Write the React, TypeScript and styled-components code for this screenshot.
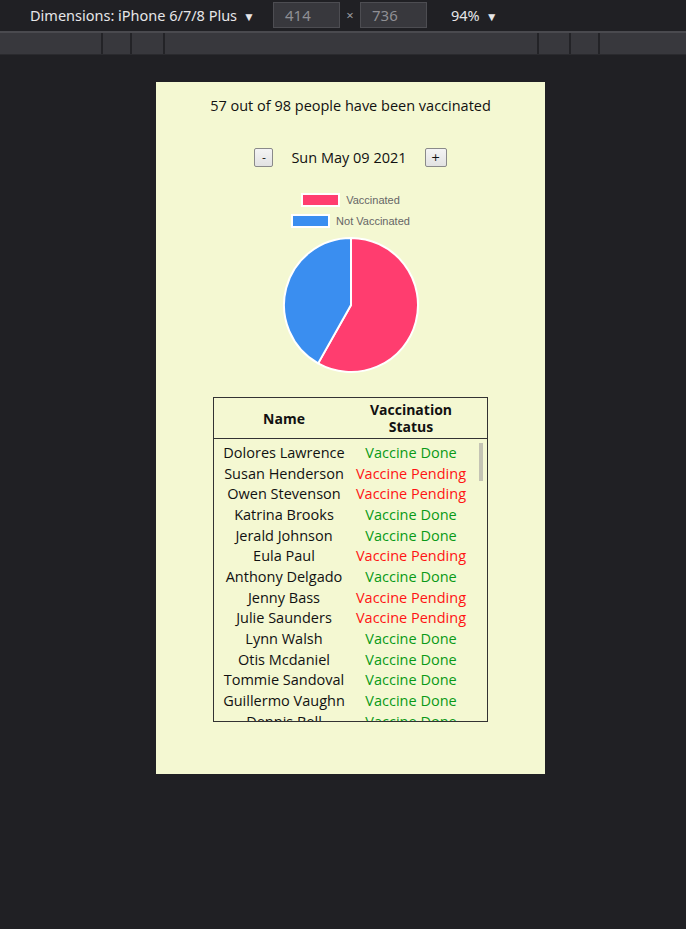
import React from "react";
import styled, { createGlobalStyle } from "styled-components";

const Global = createGlobalStyle`
  html, body { margin: 0; padding: 0; background: #202024; }
  body { font-family: "Open Sans", "Noto Sans", sans-serif; }
`;

const Page = styled.div`
  width: 686px;
  height: 929px;
  background: #202024;
  display: flex;
  flex-direction: column;
  overflow: hidden;
`;

const TopBar = styled.div`
  height: 33px;
  display: flex;
  align-items: center;
  padding-left: 30px;
  padding-bottom: 2px;
  color: #e6e6e8;
  font-size: 14.5px;
  font-family: "Noto Sans", sans-serif;
  box-sizing: border-box;
  border-bottom: 2px solid #4a4a4f;
`;

const DimLabel = styled.span`
  width: 243px;
`;

const Caret = styled.span`
  font-size: 12px;
  margin-left: 6px;
`;

const SizeBox = styled.div`
  width: 67px;
  height: 26px;
  box-sizing: border-box;
  background: #38383d;
  border: 1px solid #4d4d52;
  color: #8f8f94;
  font-size: 15px;
  display: flex;
  align-items: center;
  padding-left: 11px;
`;

const Times = styled.span`
  width: 20px;
  text-align: center;
  color: #9a9aa0;
  font-size: 13px;
`;

const Zoom = styled.span`
  margin-left: 24px;
`;

const Ruler = styled.div`
  height: 22px;
  box-sizing: border-box;
  background: #38383d;
  display: flex;
  border-bottom: 1px solid #2a2a2e;
`;

const RulerCell = styled.div<{ $w: number }>`
  box-sizing: border-box;
  width: ${(p) => p.$w}px;
  flex: ${(p) => (p.$w === 0 ? 1 : "none")};
  border-right: 2px solid #232327;
  &:last-child { border-right: none; }
`;

const Stage = styled.div`
  flex: 1;
  display: flex;
  justify-content: center;
  padding-top: 27px;
  padding-left: 15px;
`;

const Card = styled.div`
  width: 389px;
  height: 692px;
  background: #f4f8d2;
  display: flex;
  flex-direction: column;
  align-items: center;
  font-family: "Open Sans", "Noto Sans", sans-serif;
  color: #111;
`;

const Title = styled.div`
  margin-top: 14px;
  font-size: 14.5px;
  line-height: 20px;
`;

const DateRow = styled.div`
  margin-top: 32px;
  display: flex;
  align-items: center;
  gap: 18px;
  font-size: 14.5px;
`;

const StepButton = styled.button<{ $w: number }>`
  width: ${(p) => p.$w}px;
  height: 19px;
  padding: 0;
  font-size: 11px;
  line-height: 1;
  border: 1px solid #8a8a8a;
  border-radius: 2px;
  background: linear-gradient(#f4f4f4, #e2e2e2);
  color: #111;
  font-family: "DejaVu Sans", sans-serif;
`;

const Legend = styled.div`
  margin-top: 25px;
  display: flex;
  flex-direction: column;
  align-items: center;
  gap: 6px;
  font-family: "Liberation Sans", Arial, sans-serif;
  font-size: 11px;
  color: #666;
`;

const LegendItem = styled.div`
  display: flex;
  align-items: center;
  gap: 6px;
  height: 15px;
`;

const Swatch = styled.span<{ $c: string }>`
  width: 35px;
  height: 10px;
  background: ${(p) => p.$c};
  border: 2px solid #fff;
`;

const PieWrap = styled.div`
  margin-top: 8px;
  width: 138px;
  height: 138px;
`;

const Table = styled.div`
  margin-top: 23px;
  width: 275px;
  border: 1px solid #333;
  box-sizing: border-box;
  display: flex;
  flex-direction: column;
`;

const HeadRow = styled.div`
  display: grid;
  grid-template-columns: 140px 114px;
  height: 40px;
  align-items: center;
  border-bottom: 1px solid #333;
  font-weight: 700;
  font-size: 14px;
  line-height: 17px;
  text-align: center;
`;

const BodyFrame = styled.div`
  position: relative;
`;

const Body = styled.div`
  height: 282px;
  overflow-y: scroll;
  padding-top: 3px;
  box-sizing: border-box;
  scrollbar-width: none;
  &::-webkit-scrollbar { display: none; }
`;

const Thumb = styled.div`
  position: absolute;
  right: 4px;
  top: 4px;
  width: 4px;
  height: 38px;
  background: #c4c4b4;
`;

const Row = styled.div`
  display: grid;
  grid-template-columns: 140px 114px;
  height: 20.7px;
  align-items: center;
  text-align: center;
  font-size: 14.5px;
  white-space: nowrap;
`;

const Status = styled.span<{ $done: boolean }>`
  color: ${(p) => (p.$done ? "#0a9a17" : "#ff1414")};
`;

const shown: [string, boolean][] = [
  ["Dolores Lawrence", true],
  ["Susan Henderson", false],
  ["Owen Stevenson", false],
  ["Katrina Brooks", true],
  ["Jerald Johnson", true],
  ["Eula Paul", false],
  ["Anthony Delgado", true],
  ["Jenny Bass", false],
  ["Julie Saunders", false],
  ["Lynn Walsh", true],
  ["Otis Mcdaniel", true],
  ["Tommie Sandoval", true],
  ["Guillermo Vaughn", true],
  ["Dennis Bell", true],
];

const firsts = ["Marcia", "Roberto", "Della", "Karl", "Ruth", "Felix", "Nora", "Ivan", "Lena", "Oscar", "Clara"];
const lasts = ["Hayes", "Lane", "Moss", "Fisher", "Ortiz", "Grant", "Wade", "Pope", "Rice"];

const people: [string, boolean][] = [...shown];
for (let i = 0; people.length < 98; i++) {
  people.push([`${firsts[i % firsts.length]} ${lasts[(i * 4) % lasts.length]}`, i % 7 < 4]);
}

function Pie() {
  const r = 67;
  const c = 69;
  const frac = 57 / 98;
  const a = frac * 2 * Math.PI;
  const x = c + r * Math.sin(a);
  const y = c - r * Math.cos(a);
  const large = frac > 0.5 ? 1 : 0;
  const red = `M${c},${c} L${c},${c - r} A${r},${r} 0 ${large} 1 ${x},${y} Z`;
  const blue = `M${c},${c} L${x},${y} A${r},${r} 0 ${1 - large} 1 ${c},${c - r} Z`;
  return (
    <svg width="138" height="138" viewBox="0 0 138 138">
      <path d={red} fill="#ff3d6f" stroke="#fff" strokeWidth="2" strokeLinejoin="round" />
      <path d={blue} fill="#3a8ef0" stroke="#fff" strokeWidth="2" strokeLinejoin="round" />
    </svg>
  );
}

export default function App() {
  return (
    <Page>
      <Global />
      <TopBar>
        <DimLabel>
          Dimensions: iPhone 6/7/8 Plus<Caret>▼</Caret>
        </DimLabel>
        <SizeBox>414</SizeBox>
        <Times>×</Times>
        <SizeBox>736</SizeBox>
        <Zoom>
          94%<Caret>▼</Caret>
        </Zoom>
      </TopBar>
      <Ruler>
        <RulerCell $w={103} />
        <RulerCell $w={29} />
        <RulerCell $w={33} />
        <RulerCell $w={374} />
        <RulerCell $w={32} />
        <RulerCell $w={29} />
        <RulerCell $w={0} />
      </Ruler>
      <Stage>
        <Card>
          <Title>57 out of 98 people have been vaccinated</Title>
          <DateRow>
            <StepButton $w={19}>-</StepButton>
            <span>Sun May 09 2021</span>
            <StepButton $w={22}>+</StepButton>
          </DateRow>
          <Legend>
            <LegendItem>
              <Swatch $c="#ff3d6f" />
              Vaccinated
            </LegendItem>
            <LegendItem>
              <Swatch $c="#3a8ef0" />
              Not Vaccinated
            </LegendItem>
          </Legend>
          <PieWrap>
            <Pie />
          </PieWrap>
          <Table>
            <HeadRow>
              <span>Name</span>
              <span>
                Vaccination
                <br />
                Status
              </span>
            </HeadRow>
            <BodyFrame>
              <Body>
                {people.map(([n, d], i) => (
                  <Row key={i}>
                    <span>{n}</span>
                    <Status $done={d}>{d ? "Vaccine Done" : "Vaccine Pending"}</Status>
                  </Row>
                ))}
              </Body>
              <Thumb />
            </BodyFrame>
          </Table>
        </Card>
      </Stage>
    </Page>
  );
}
